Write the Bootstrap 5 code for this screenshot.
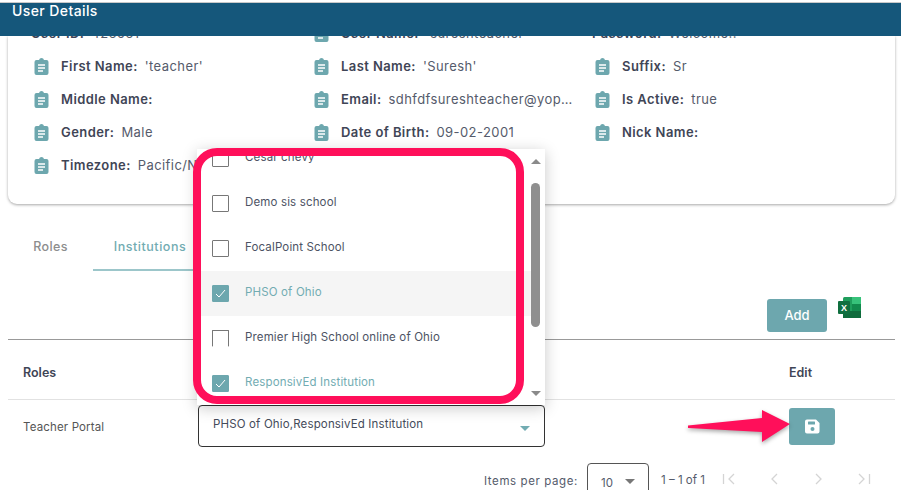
<!DOCTYPE html>
<html lang="en">
<head>
<meta charset="utf-8">
<title>User Details</title>
<link href="https://cdn.jsdelivr.net/npm/bootstrap@5.3.0/dist/css/bootstrap.min.css" rel="stylesheet">
<style>
html,body{height:490px;overflow:hidden;background:#fff}
body{font-family:"Inter","Open Sans",sans-serif;font-size:13px;color:#555b6b}
.top-strip{height:3px;background:#fff;border-bottom:1px solid #c9c9c9}
.head-bar{height:33px;background:#15577b;color:#fff;font-size:14px;letter-spacing:.4px;font-weight:500;padding:0 12px;line-height:15px;position:relative;z-index:2}
.info-card{margin:0 6px 0 8px;height:168px;border-radius:0 0 9px 9px;box-shadow:0 1px 3px rgba(0,0,0,.35);overflow:hidden}
.info-grid{display:grid;grid-template-columns:280px 281px 1fr;grid-auto-rows:33px;margin:-19px 0 0 26px;letter-spacing:.42px}
.info-item{gap:12px;white-space:nowrap;min-width:0}
.info-item b{font-weight:600;color:#3f4556;margin-right:7px}
.info-item span{overflow:hidden;text-overflow:ellipsis;max-width:239px}
.info-item svg{flex:none}
.no-ic{margin-left:-3px}
.tab-row{margin:21px 0 0 8px;height:45px}
.tab-link{font-size:12.5px;letter-spacing:.35px;font-weight:500;line-height:44px;text-align:center;color:#8d8d8d}
.tab-a{width:85px}
.tab-b{width:114px;color:#72acb2;border-bottom:2px solid #9cc6ca;letter-spacing:.55px}
.tool-row{height:69px;padding:29px 40px 0 0;gap:11px}
.add-btn{width:60px;height:33px;background:#6da7ae;color:#fff;border:0;border-radius:3px;font-size:13px;font-weight:500;padding:0}
.xl-ic{margin-top:-2px}
.tbl-wrap{margin:0 6px 0 8px;border-top:1px solid #999}
.tbl-wrap .table{margin:0;table-layout:fixed}
.tbl-wrap th,.tbl-wrap td{padding:0;color:#3f4556}
.tbl-wrap th{height:59px;padding-top:8px;vertical-align:middle;font-weight:600;font-size:12.5px;border-bottom:1px solid #e2e2e2}
.tbl-wrap td{height:60px;border:0;font-size:11.5px;letter-spacing:.15px;color:#555;vertical-align:top}
.c-a{width:190px;padding-left:15px!important}
td.c-a{padding-top:19px!important}
.c-b{width:591px}
.inst-sel{width:347px;height:42px;margin-top:5px;border:1px solid #333;border-radius:4px;padding:0 14px;font-size:11.5px;letter-spacing:.15px;color:#444b5a;position:relative}
.inst-sel>span:first-child{margin-top:-2px}
.sel-caret{width:0;height:0;border-left:5px solid transparent;border-right:5px solid transparent;border-top:5px solid #72acb2;margin-top:5px}
.drop-panel{position:absolute;left:-2px;top:-257px;width:348px;height:256px;background:#fff;box-shadow:0 3px 14px rgba(0,0,0,.22);overflow:hidden;z-index:3}
.opt-list{margin-top:-13px}
.opt-row{height:45px;padding-left:15px;gap:16px;width:335px;font-size:11.5px;color:#4d5364}
.opt-on{color:#72acb2}
.opt-hi{background:#f5f5f5}
.chk{width:17px;height:17px;border:1px solid #777;border-radius:1px;flex:none;display:flex;align-items:center;justify-content:center}
.chk-on{background:#6da7ae;border-color:#6da7ae}
.chk-cut{border-bottom-color:transparent}
.scroll-rail{position:absolute;top:0;right:3px;width:12px;height:100%}
.scroll-up,.scroll-dn{position:absolute;left:1px;width:0;height:0;border-left:5px solid transparent;border-right:5px solid transparent}
.scroll-up{top:10px;border-bottom:5px solid #8a8a8a}
.scroll-dn{bottom:9px;border-top:5px solid #8a8a8a}
.scroll-th{position:absolute;left:1px;top:34px;width:9px;height:144px;border-radius:5px;background:#8f8f8f}
.pink-frame{position:absolute;left:-6px;top:-258px;width:331px;height:256px;border:8px solid #ff0f5a;border-radius:24px;z-index:4}
.save-wrap{position:relative;width:46px;margin-top:8px}
.save-btn{width:46px;height:37px;background:#6da7ae;border:0;border-radius:3px;padding:0}
.pink-arrow{position:absolute;left:-106px;top:-4px;z-index:4;overflow:visible;filter:drop-shadow(0 2px 2px rgba(0,0,0,.35))}
.pager{height:31px;overflow:hidden;padding:4px 0 0 484px;font-size:11.5px;letter-spacing:.6px;color:#555b6b}
.pg-label{width:103px;padding-top:10px;white-space:nowrap}
.pg-sel{width:62px;height:40px;border:1px solid #555;border-radius:4px;padding:11px 13px 0;flex:none;letter-spacing:0}
.pg-caret{width:0;height:0;border-left:5px solid transparent;border-right:5px solid transparent;border-top:5px solid #777;margin-top:4px}
.pg-range{margin-left:12px;width:60px;padding-top:9px;white-space:nowrap;letter-spacing:0}
.pg-icons{gap:31px;margin-left:1px;padding-top:10px}
.pg-icons svg{flex:none}
</style>
</head>
<body>
<div class="top-strip"></div>
<div class="head-bar">User Details</div>
<div class="info-card">
  <div class="info-grid">
    <div class="info-item d-flex align-items-center no-ic"><span><b>User ID:</b>426561</span></div>
    <div class="info-item d-flex align-items-center"><svg width="15" height="17" viewBox="0 0 15 17"><use href="#clip"/></svg><span><b>User Name:</b>'sureshteacher'</span></div>
    <div class="info-item d-flex align-items-center no-ic"><span><b>Password:</b>Welcome!!</span></div>

    <div class="info-item d-flex align-items-center"><svg width="15" height="17" viewBox="0 0 15 17"><use href="#clip"/></svg><span><b>First Name:</b>'teacher'</span></div>
    <div class="info-item d-flex align-items-center"><svg width="15" height="17" viewBox="0 0 15 17"><use href="#clip"/></svg><span><b>Last Name:</b>'Suresh'</span></div>
    <div class="info-item d-flex align-items-center"><svg width="15" height="17" viewBox="0 0 15 17"><use href="#clip"/></svg><span><b>Suffix:</b>Sr</span></div>

    <div class="info-item d-flex align-items-center"><svg width="15" height="17" viewBox="0 0 15 17"><use href="#clip"/></svg><span><b>Middle Name:</b></span></div>
    <div class="info-item d-flex align-items-center"><svg width="15" height="17" viewBox="0 0 15 17"><use href="#clip"/></svg><span><b>Email:</b>sdhfdfsureshteacher@yopmail.com</span></div>
    <div class="info-item d-flex align-items-center"><svg width="15" height="17" viewBox="0 0 15 17"><use href="#clip"/></svg><span><b>Is Active:</b>true</span></div>

    <div class="info-item d-flex align-items-center"><svg width="15" height="17" viewBox="0 0 15 17"><use href="#clip"/></svg><span><b>Gender:</b>Male</span></div>
    <div class="info-item d-flex align-items-center"><svg width="15" height="17" viewBox="0 0 15 17"><use href="#clip"/></svg><span><b>Date of Birth:</b>09-02-2001</span></div>
    <div class="info-item d-flex align-items-center"><svg width="15" height="17" viewBox="0 0 15 17"><use href="#clip"/></svg><span><b>Nick Name:</b></span></div>

    <div class="info-item d-flex align-items-center"><svg width="15" height="17" viewBox="0 0 15 17"><use href="#clip"/></svg><span><b>Timezone:</b>Pacific/New_York</span></div>
  </div>
</div>

<svg width="0" height="0" class="position-absolute"><defs>
  <g id="clip"><path d="M2.500 2H5a2.600 2.600 0 0 1 5 0h2.500A2 2 0 0 1 14.500 4v11a2 2 0 0 1-2 2h-10a2 2 0 0 1-2-2V4a2 2 0 0 1 2-2z" fill="#6da7ae"/><path d="M4 7h7M4 10h7M4 13h5" stroke="#fff" stroke-width="1.400"/></g>
</defs></svg>

<div class="nav tab-row">
  <div class="tab-link tab-a">Roles</div>
  <div class="tab-link tab-b">Institutions</div>
</div>

<div class="tool-row d-flex justify-content-end align-items-start">
  <button class="btn add-btn" type="button">Add</button>
  <svg class="xl-ic" width="23" height="22" viewBox="0 0 23 22">
    <rect x="5" y="0" width="18" height="21" rx="1.500" fill="#1f9e5c"/>
    <rect x="14" y="0" width="9" height="7" fill="#37c27a"/>
    <rect x="5" y="14" width="18" height="7" fill="#0f6b3c"/>
    <rect x="14" y="7" width="9" height="7" fill="#128a4d"/>
    <rect x="0" y="4" width="12" height="13" rx="1" fill="#0f6f3f"/>
    <text x="6" y="14" text-anchor="middle" font-size="9" font-weight="700" fill="#fff" font-family="Liberation Sans, sans-serif">X</text>
  </svg>
</div>

<div class="tbl-wrap">
  <table class="table">
    <thead>
      <tr><th class="c-a">Roles</th><th class="c-b"></th><th>Edit</th></tr>
    </thead>
    <tbody>
      <tr>
        <td class="c-a">Teacher Portal</td>
        <td>
          <div class="inst-sel d-flex align-items-center justify-content-between">
            <span>PHSO of Ohio,ResponsivEd Institution</span><span class="sel-caret"></span>
            <div class="drop-panel">
              <div class="opt-list">
                <div class="opt-row d-flex align-items-center"><span class="chk"></span>Cesar chevy</div>
                <div class="opt-row d-flex align-items-center"><span class="chk"></span>Demo sis school</div>
                <div class="opt-row d-flex align-items-center"><span class="chk"></span>FocalPoint School</div>
                <div class="opt-row opt-hi opt-on d-flex align-items-center"><span class="chk chk-on"><svg width="13" height="13" viewBox="0 0 13 13"><path d="M2 7l3 3 6-7" fill="none" stroke="#fff" stroke-width="1"/></svg></span>PHSO of Ohio</div>
                <div class="opt-row d-flex align-items-center"><span class="chk chk-cut"></span>Premier High School online of Ohio</div>
                <div class="opt-row opt-on d-flex align-items-center"><span class="chk chk-on"><svg width="13" height="13" viewBox="0 0 13 13"><path d="M2 7l3 3 6-7" fill="none" stroke="#fff" stroke-width="1"/></svg></span>ResponsivEd Institution</div>
              </div>
              <div class="scroll-rail"><span class="scroll-up"></span><span class="scroll-th"></span><span class="scroll-dn"></span></div>
            </div>
            <div class="pink-frame"></div>
          </div>
        </td>
        <td>
          <div class="save-wrap">
            <svg class="pink-arrow" width="106" height="44" viewBox="0 0 106 44"><path d="M5 21.500 79 14V6l28 14-28 18v-10L5 24z" fill="#ff0f5a"/></svg>
            <button class="btn save-btn d-flex align-items-center justify-content-center" type="button" aria-label="Save">
              <svg width="15" height="15" viewBox="0 0 15 15"><path d="M2 0.500h9L14.500 4v8.500a2 2 0 0 1-2 2h-10.500a2 2 0 0 1-2-2v-10a2 2 0 0 1 2-2z" fill="#fff"/><rect x="3" y="2.500" width="7" height="3" rx=".5" fill="#6da7ae"/><circle cx="7.500" cy="10" r="2" fill="#6da7ae"/></svg>
            </button>
          </div>
        </td>
      </tr>
    </tbody>
  </table>
</div>

<div class="pager d-flex align-items-start">
  <div class="pg-label">Items per page:</div>
  <div class="pg-sel d-flex justify-content-between"><span>10</span><span class="pg-caret"></span></div>
  <div class="pg-range">1 – 1 of 1</div>
  <div class="pg-icons d-flex">
    <svg width="14" height="12" viewBox="0 0 14 12"><path d="M1.500 1v10M12 1 7 6l5 5" fill="none" stroke="#d4d4d4" stroke-width="1.300"/></svg>
    <svg width="14" height="12" viewBox="0 0 14 12"><path d="M10 1 5 6l5 5" fill="none" stroke="#d4d4d4" stroke-width="1.300"/></svg>
    <svg width="14" height="12" viewBox="0 0 14 12"><path d="M4 1l5 5-5 5" fill="none" stroke="#d4d4d4" stroke-width="1.300"/></svg>
    <svg width="14" height="12" viewBox="0 0 14 12"><path d="M2 1l5 5-5 5M12.500 1v10" fill="none" stroke="#d4d4d4" stroke-width="1.300"/></svg>
  </div>
</div>
<script src="https://cdn.jsdelivr.net/npm/bootstrap@5.3.0/dist/js/bootstrap.bundle.min.js"></script>
</body>
</html>
